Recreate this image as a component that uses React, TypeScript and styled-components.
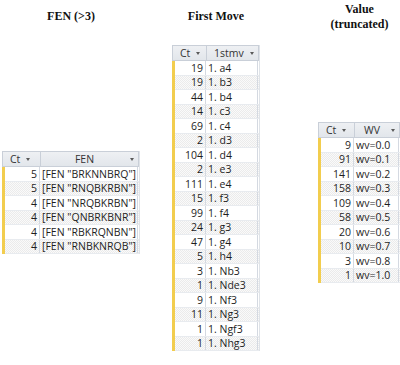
import styled, { createGlobalStyle } from "styled-components";

const GlobalStyle = createGlobalStyle`
  html, body {
    margin: 0;
    padding: 0;
    background: #ffffff;
  }
  body {
    width: 400px;
    height: 365px;
    overflow: hidden;
  }
`;

type Row = [number, string];

const fenRows: Row[] = [
  [5, '[FEN "BRKNNBRQ"]'],
  [5, '[FEN "RNQBKRBN"]'],
  [4, '[FEN "NRQBKRBN"]'],
  [4, '[FEN "QNBRKBNR"]'],
  [4, '[FEN "RBKRQNBN"]'],
  [4, '[FEN "RNBKNRQB"]'],
];

const moveRows: Row[] = [
  [19, "1. a4"],
  [19, "1. b3"],
  [44, "1. b4"],
  [14, "1. c3"],
  [69, "1. c4"],
  [2, "1. d3"],
  [104, "1. d4"],
  [2, "1. e3"],
  [111, "1. e4"],
  [15, "1. f3"],
  [99, "1. f4"],
  [24, "1. g3"],
  [47, "1. g4"],
  [5, "1. h4"],
  [3, "1. Nb3"],
  [1, "1. Nde3"],
  [9, "1. Nf3"],
  [11, "1. Ng3"],
  [1, "1. Ngf3"],
  [1, "1. Nhg3"],
];

const wvRows: Row[] = [
  [9, "wv=0.0"],
  [91, "wv=0.1"],
  [141, "wv=0.2"],
  [158, "wv=0.3"],
  [109, "wv=0.4"],
  [58, "wv=0.5"],
  [20, "wv=0.6"],
  [10, "wv=0.7"],
  [3, "wv=0.8"],
  [1, "wv=1.0"],
];

const Page = styled.div`
  display: flex;
  align-items: flex-start;
  width: 400px;
  height: 365px;
  padding-left: 2px;
  box-sizing: border-box;
`;

const Column = styled.section<{ $gap: number }>`
  display: flex;
  flex-direction: column;
  align-items: center;
  margin-left: ${(p) => p.$gap}px;
`;

const Title = styled.h2`
  margin: 0;
  height: 31px;
  padding-top: 1px;
  display: flex;
  align-items: center;
  justify-content: center;
  text-align: center;
  font-family: "Liberation Serif", "Times New Roman", serif;
  font-weight: bold;
  font-size: 12px;
  line-height: 15px;
  color: #111;
`;

const Table = styled.div<{ $top: number }>`
  margin-top: ${(p) => p.$top}px;
  border-right: 1px solid #dfe3e8;
  font-family: "Open Sans", "Liberation Sans", sans-serif;
  font-size: 10.5px;
  color: #1e1e1e;
`;

const Header = styled.div`
  display: flex;
  height: 16px;
  background: linear-gradient(#eef0f3, #e2e6eb);
  border: 1px solid #c9cfd8;
  border-right: none;
  box-sizing: border-box;
`;

const HeadCell = styled.div<{ $w: number; $center?: boolean }>`
  width: ${(p) => p.$w}px;
  display: flex;
  align-items: center;
  padding: 0 4px 0 ${(p) => (p.$center ? 4 : 7)}px;
  box-sizing: border-box;
  border-right: 1px solid #c9cfd8;
  gap: 6px;
  color: #333;
`;

const HeadLabel = styled.span<{ $center?: boolean }>`
  flex: ${(p) => (p.$center ? 1 : "none")};
  text-align: ${(p) => (p.$center ? "center" : "left")};
`;

const Arrow = styled.span`
  width: 0;
  height: 0;
  margin-left: auto;
  border-left: 2.5px solid transparent;
  border-right: 2.5px solid transparent;
  border-top: 3px solid #5a5a5a;
`;

const ArrowTight = styled(Arrow)`
  margin-left: 0;
`;

const Body = styled.div`
  border-left: 3px solid #f2cd4e;
`;

const DataRow = styled.div<{ $odd: boolean }>`
  display: flex;
  height: 14.5px;
  box-sizing: border-box;
  border-bottom: 1px solid #e8ebef;
  background: ${(p) =>
    p.$odd
      ? "repeating-conic-gradient(#ebebeb 0 25%, #fafafa 0 50%) 0 0 / 2px 2px"
      : "#ffffff"};
`;

const Cell = styled.div<{ $w: number; $right?: boolean }>`
  width: ${(p) => p.$w}px;
  box-sizing: border-box;
  display: flex;
  align-items: center;
  justify-content: ${(p) => (p.$right ? "flex-end" : "flex-start")};
  padding: ${(p) => (p.$right ? "0 2px 0 0" : "0 0 0 2px")};
  border-right: 1px solid #d4d9e1;
  white-space: nowrap;
  overflow: hidden;
  line-height: 1;
`;

type TableProps = {
  top: number;
  ctW: number;
  colW: number;
  label: string;
  centerLabel?: boolean;
  rows: Row[];
};

const DataTable = ({ top, ctW, colW, label, centerLabel, rows }: TableProps) => (
  <Table $top={top}>
    <Header>
      <HeadCell $w={ctW}>
        <HeadLabel>Ct</HeadLabel>
        <ArrowTight />
      </HeadCell>
      <HeadCell $w={colW} $center={centerLabel}>
        <HeadLabel $center={centerLabel}>{label}</HeadLabel>
        {centerLabel ? <Arrow /> : <ArrowTight />}
      </HeadCell>
    </Header>
    <Body>
      {rows.map(([ct, val], i) => (
        <DataRow key={val} $odd={i % 2 === 1}>
          <Cell $w={ctW - 3} $right>
            {ct}
          </Cell>
          <Cell $w={colW}>{val}</Cell>
        </DataRow>
      ))}
    </Body>
  </Table>
);

const App = () => {
  return (
    <>
      <GlobalStyle />
      <Page>
        <Column $gap={0}>
          <Title>FEN (&gt;3)</Title>
          <DataTable top={119} ctW={38} colW={98} label="FEN" centerLabel rows={fenRows} />
        </Column>
        <Column $gap={32}>
          <Title>First Move</Title>
          <DataTable top={13} ctW={34} colW={52} label="1stmv" rows={moveRows} />
        </Column>
        <Column $gap={58}>
          <Title>
            Value
            <br />
            (truncated)
          </Title>
          <DataTable top={90} ctW={36} colW={45} label="WV" centerLabel rows={wvRows} />
        </Column>
      </Page>
    </>
  );
};

export default App;
